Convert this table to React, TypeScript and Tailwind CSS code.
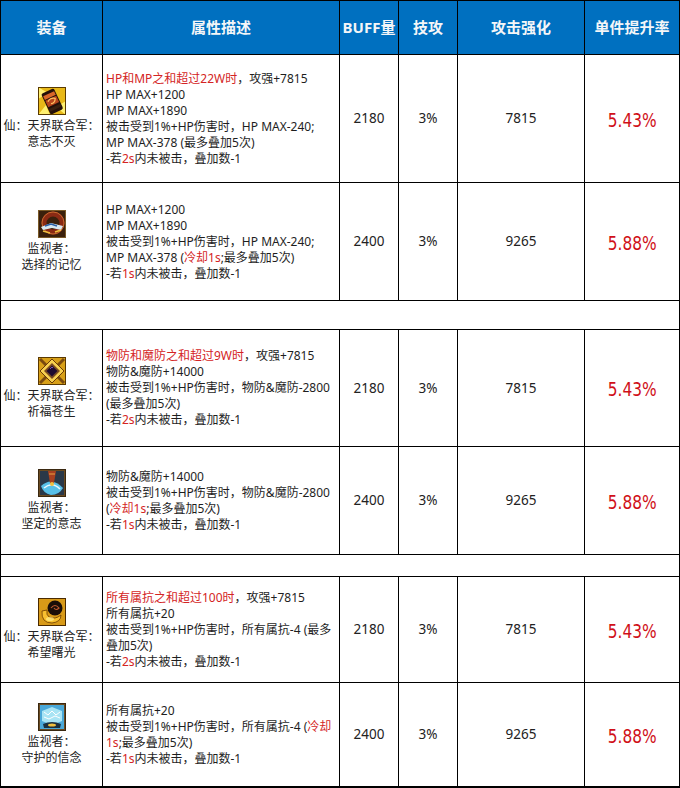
import React from "react";

type Row = {
  icon: number;
  name: [string, string];
  desc: string[];
  buff: string;
  skill: string;
  atk: string;
  pct: string;
};

const rows: Row[] = [
  {
    icon: 1,
    name: ["仙：天界联合军：", "意志不灭"],
    desc: [
      "{HP和MP之和超过22W时}，攻强+7815",
      "HP MAX+1200",
      "MP MAX+1890",
      "被击受到1%+HP伤害时，HP MAX-240;",
      "MP MAX-378 (最多叠加5次)",
      "-若{2s}内未被击，叠加数-1",
    ],
    buff: "2180",
    skill: "3%",
    atk: "7815",
    pct: "5.43%",
  },
  {
    icon: 2,
    name: ["监视者：", "选择的记忆"],
    desc: [
      "HP MAX+1200",
      "MP MAX+1890",
      "被击受到1%+HP伤害时，HP MAX-240;",
      "MP MAX-378 ({冷却1s};最多叠加5次)",
      "-若{1s}内未被击，叠加数-1",
    ],
    buff: "2400",
    skill: "3%",
    atk: "9265",
    pct: "5.88%",
  },
  {
    icon: 3,
    name: ["仙：天界联合军：", "祈福苍生"],
    desc: [
      "{物防和魔防之和超过9W时}，攻强+7815",
      "物防&魔防+14000",
      "被击受到1%+HP伤害时，物防&魔防-2800",
      "(最多叠加5次)",
      "-若{2s}内未被击，叠加数-1",
    ],
    buff: "2180",
    skill: "3%",
    atk: "7815",
    pct: "5.43%",
  },
  {
    icon: 4,
    name: ["监视者：", "坚定的意志"],
    desc: [
      "物防&魔防+14000",
      "被击受到1%+HP伤害时，物防&魔防-2800",
      "({冷却1s};最多叠加5次)",
      "-若{1s}内未被击，叠加数-1",
    ],
    buff: "2400",
    skill: "3%",
    atk: "9265",
    pct: "5.88%",
  },
  {
    icon: 5,
    name: ["仙：天界联合军：", "希望曙光"],
    desc: [
      "{所有属抗之和超过100时}，攻强+7815",
      "所有属抗+20",
      "被击受到1%+HP伤害时，所有属抗-4 (最多",
      "叠加5次)",
      "-若{2s}内未被击，叠加数-1",
    ],
    buff: "2180",
    skill: "3%",
    atk: "7815",
    pct: "5.43%",
  },
  {
    icon: 6,
    name: ["监视者：", "守护的信念"],
    desc: [
      "所有属抗+20",
      "被击受到1%+HP伤害时，所有属抗-4 ({冷却}",
      "{1s};最多叠加5次)",
      "-若{1s}内未被击，叠加数-1",
    ],
    buff: "2400",
    skill: "3%",
    atk: "9265",
    pct: "5.88%",
  },
];

function Line({ text }: { text: string }) {
  const parts = text.split(/(\{[^}]*\})/).filter((p) => p.length > 0);
  return (
    <div className="whitespace-nowrap h-4 leading-4">
      {parts.map((p, i) =>
        p.startsWith("{") ? (
          <span key={i} className="text-[#d42424]">
            {p.slice(1, -1)}
          </span>
        ) : (
          <span key={i}>{p}</span>
        )
      )}
    </div>
  );
}

function Icon({ n }: { n: number }) {
  const common = "w-[28px] h-[28px] block";
  if (n === 1)
    return (
      <svg viewBox="0 0 28 28" className={common} shapeRendering="geometricPrecision">
        <rect width="28" height="28" fill="#e8b818" />
        <path d="M0 0 L10 6 L0 12Z M28 28 L18 20 L28 14Z M0 28 L8 18 L12 28Z" fill="#fff070" />
        <g transform="rotate(-25 14 14)">
          <rect x="7" y="3" width="14" height="23" rx="2" fill="#24100a" />
          <rect x="8" y="6" width="12" height="4" fill="#d8662a" />
          <rect x="8" y="11" width="12" height="7" fill="#b8451c" />
          <path d="M10 13 q4 -3 8 0 q-2 4 -6 3" stroke="#ffc060" strokeWidth="1.2" fill="none" />
          <rect x="8" y="20" width="12" height="3" fill="#3a2010" />
        </g>
        <rect x="0.5" y="0.5" width="27" height="27" fill="none" stroke="#5a3a00" />
      </svg>
    );
  if (n === 2)
    return (
      <svg viewBox="0 0 28 28" className={common}>
        <rect width="28" height="28" fill="#3a200c" />
        <circle cx="15" cy="13" r="9" fill="none" stroke="#8a2a14" strokeWidth="5" />
        <circle cx="15" cy="13" r="11" fill="none" stroke="#c86a30" strokeWidth="1" />
        <path d="M3 17 l10 -4 l12 3 l-2 4 l-9 -2 l-9 2z" fill="#d8e8f0" />
        <path d="M7 16 l6 -2 l6 2" stroke="#2a60a8" strokeWidth="1.6" fill="none" />
        <path d="M5 21 l7 2 M17 22 l6 -2" stroke="#f0c040" strokeWidth="1.5" />
        <rect x="0.5" y="0.5" width="27" height="27" fill="none" stroke="#7a5a28" />
      </svg>
    );
  if (n === 3)
    return (
      <svg viewBox="0 0 28 28" className={common}>
        <rect width="28" height="28" fill="#d8a018" />
        <path d="M2 2 L26 26 M26 2 L2 26" stroke="#7a4a10" strokeWidth="3" />
        <path d="M14 2 L26 14 L14 26 L2 14 Z" fill="#f8d050" stroke="#6a3a08" strokeWidth="1" />
        <path d="M14 6 L22 14 L14 22 L6 14 Z" fill="#7a4a20" />
        <path d="M14 8.5 L19.5 14 L14 19.5 L8.5 14 Z" fill="#1e0a30" />
        <path d="M12 12 L14 10 L15 11" stroke="#8a6ad0" strokeWidth="0.8" fill="none" />
        <rect x="0.5" y="0.5" width="27" height="27" fill="none" stroke="#5a3800" />
      </svg>
    );
  if (n === 4)
    return (
      <svg viewBox="0 0 28 28" className={common}>
        <rect width="28" height="28" fill="#6a4a20" />
        <rect x="2" y="2" width="24" height="24" fill="#2a3848" />
        <path d="M3 17 Q14 7 25 19 Q21 26 13 26 Q5 24 3 17Z" fill="#58c0e8" />
        <path d="M6 19 Q14 12 22 20" stroke="#e8f8ff" strokeWidth="1.6" fill="none" />
        <path d="M10 2 L18 2 L16 14 L12 14 Z" fill="#a84020" />
        <path d="M11 5 L17 5" stroke="#e8a040" strokeWidth="1" />
        <circle cx="14" cy="15" r="2" fill="#f0c040" />
        <rect x="0.5" y="0.5" width="27" height="27" fill="none" stroke="#3a2810" />
      </svg>
    );
  if (n === 5)
    return (
      <svg viewBox="0 0 28 28" className={common}>
        <rect width="28" height="28" fill="#d89a18" />
        <circle cx="17" cy="10" r="7.5" fill="#1a0e08" />
        <path d="M13 10 q4 -5 8 0 q-3 3 -5 0" stroke="#c05a30" strokeWidth="1.2" fill="none" />
        <path d="M4 13 Q3 25 14 25 Q23 24 23 17 Q17 22 11 19 Q8 17 9 12Z" fill="#f8c030" stroke="#6a3a00" strokeWidth="0.8" />
        <ellipse cx="12" cy="21" rx="4" ry="2" fill="#fff090" opacity="0.7" />
        <rect x="0.5" y="0.5" width="27" height="27" fill="none" stroke="#4a2a00" />
      </svg>
    );
  return (
    <svg viewBox="0 0 28 28" className={common}>
      <rect width="28" height="28" fill="#6a4a20" />
      <rect x="2" y="2" width="24" height="24" fill="#4aa8d8" />
      <path d="M4 8 L14 4 L24 8 L24 18 L14 22 L4 18Z" fill="#a8e4f4" />
      <path d="M6 9 l4 3 l4 -4 l4 4 l4 -3 M6 14 l5 2 l6 -3 l5 2" stroke="#ffffff" strokeWidth="1" fill="none" />
      <path d="M5 21 Q14 17 23 21 L22 25 L6 25Z" fill="#1a3040" />
      <ellipse cx="14" cy="22" rx="4" ry="1.6" fill="#f0c040" />
      <rect x="0.5" y="0.5" width="27" height="27" fill="none" stroke="#3a2810" />
    </svg>
  );
}

const headers = ["装备", "属性描述", "BUFF量", "技攻", "攻击强化", "单件提升率"];

export default function App() {
  const font = { fontFamily: '"Noto Sans", "Noto Sans CJK SC", sans-serif' };
  const cells: React.ReactNode[] = [];

  headers.forEach((h) => {
    cells.push(
      <div
        key={"h" + h}
        className="bg-[#0070c0] text-[#f4f6f8] font-bold text-[15px] flex items-center justify-center"
      >
        {h}
      </div>
    );
  });

  rows.forEach((r, i) => {
    if (i === 2 || i === 4) {
      cells.push(<div key={"sp" + i} className="bg-white col-span-6" />);
    }
    cells.push(
      <div key={"n" + i} className="bg-white flex flex-col items-center justify-center text-[12px] text-[#222] leading-4">
        <Icon n={r.icon} />
        <div className="mt-[3px] text-center whitespace-nowrap">{r.name[0]}</div>
        <div className="text-center whitespace-nowrap">{r.name[1]}</div>
      </div>
    );
    cells.push(
      <div key={"d" + i} className="bg-white flex flex-col justify-center pl-[3px] text-[12px] text-[#1e1e1e]">
        {r.desc.map((l, j) => (
          <Line key={j} text={l} />
        ))}
      </div>
    );
    cells.push(
      <div key={"b" + i} className="bg-white flex items-center justify-center text-[13.5px] text-[#222]">
        {r.buff}
      </div>
    );
    cells.push(
      <div key={"s" + i} className="bg-white flex items-center justify-center text-[13.5px] text-[#222]">
        {r.skill}
      </div>
    );
    cells.push(
      <div key={"a" + i} className="bg-white flex items-center justify-center text-[13.5px] text-[#222]">
        {r.atk}
      </div>
    );
    cells.push(
      <div key={"p" + i} className="bg-white flex items-center justify-center pt-[3px]">
        <span
          className="text-[19px] text-[#d01018] scale-x-90 inline-block"
          style={{ fontFamily: '"DejaVu Sans Condensed", "DejaVu Sans", sans-serif', fontStretch: "condensed" }}
        >
          {r.pct}
        </span>
      </div>
    );
  });

  return (
    <div style={font} className="w-[680px] h-[788px] bg-white">
      <div className="grid grid-cols-[101px_236px_58px_58px_126px_94px] grid-rows-[53px_127px_117px_28px_116px_107px_21px_105px_103px] gap-px bg-black p-px pb-[2px] w-[680px]">
        {cells}
      </div>
    </div>
  );
}
